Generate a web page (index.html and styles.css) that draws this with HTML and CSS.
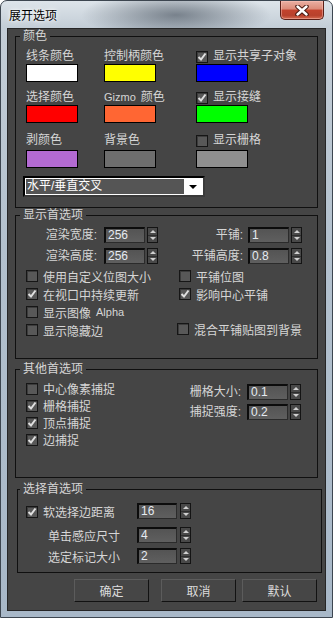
FILE: index.html
```html
<!DOCTYPE html>
<html lang="zh-CN">
<head>
  <meta charset="UTF-8">
  <meta name="viewport" content="width=device-width, initial-scale=1.0">
  <title>展开选项</title>
  <link rel="stylesheet" href="styles.css">
</head>
<body>
  <div class="window">
    <div class="titlebar">
      <span class="title">展开选项</span>
      <span class="close-btn">
        <svg width="14" height="11" viewBox="0 0 14 11">
          <path class="x-edge" d="M2.5 1.5 L11.5 9.5 M11.5 1.5 L2.5 9.5"/>
          <path class="x-mark" d="M2.5 1.5 L11.5 9.5 M11.5 1.5 L2.5 9.5"/>
        </svg>
      </span>
    </div>

    <div class="client">
      <!-- 颜色 -->
      <fieldset class="group group-colors">
        <legend>颜色</legend>
        <div class="color-grid">
          <div class="color-cell">
            <div class="color-label">线条颜色</div>
            <div class="swatch swatch-white"></div>
          </div>
          <div class="color-cell">
            <div class="color-label">控制柄颜色</div>
            <div class="swatch swatch-yellow"></div>
          </div>
          <div class="color-cell">
            <div class="color-label"><span class="cb"><svg class="tick" width="10" height="10" viewBox="0 0 10 10"><path d="M1.5 5 L4 7.5 L8.5 1.5"/></svg></span>显示共享子对象</div>
            <div class="swatch swatch-blue"></div>
          </div>

          <div class="color-cell">
            <div class="color-label">选择颜色</div>
            <div class="swatch swatch-red"></div>
          </div>
          <div class="color-cell">
            <div class="color-label"><span class="latin">Gizmo</span> 颜色</div>
            <div class="swatch swatch-orange"></div>
          </div>
          <div class="color-cell">
            <div class="color-label"><span class="cb"><svg class="tick" width="10" height="10" viewBox="0 0 10 10"><path d="M1.5 5 L4 7.5 L8.5 1.5"/></svg></span>显示接缝</div>
            <div class="swatch swatch-green"></div>
          </div>

          <div class="color-cell">
            <div class="color-label">剥颜色</div>
            <div class="swatch swatch-purple"></div>
          </div>
          <div class="color-cell">
            <div class="color-label">背景色</div>
            <div class="swatch swatch-grey"></div>
          </div>
          <div class="color-cell">
            <div class="color-label"><span class="cb"></span>显示栅格</div>
            <div class="swatch swatch-lightgrey"></div>
          </div>
        </div>

        <div class="combo">
          <span class="combo-value">水平/垂直交叉</span>
          <span class="combo-arrow"></span>
        </div>
      </fieldset>

      <!-- 显示首选项 -->
      <fieldset class="group group-display">
        <legend>显示首选项</legend>
        <div class="spin-grid">
          <div class="field">
            <span class="field-label label-l">渲染宽度:</span>
            <div class="spin"><span class="spin-input">256</span><span class="spin-arrows"><i class="up"></i><i class="down"></i></span></div>
          </div>
          <div class="field">
            <span class="field-label label-r">平铺:</span>
            <div class="spin"><span class="spin-input">1</span><span class="spin-arrows"><i class="up"></i><i class="down"></i></span></div>
          </div>
          <div class="field">
            <span class="field-label label-l">渲染高度:</span>
            <div class="spin"><span class="spin-input">256</span><span class="spin-arrows"><i class="up"></i><i class="down"></i></span></div>
          </div>
          <div class="field">
            <span class="field-label label-r">平铺高度:</span>
            <div class="spin"><span class="spin-input">0.8</span><span class="spin-arrows"><i class="up"></i><i class="down"></i></span></div>
          </div>
        </div>

        <div class="check-grid">
          <div class="check"><span class="cb"></span>使用自定义位图大小</div>
          <div class="check"><span class="cb"></span>平铺位图</div>
          <div class="check"><span class="cb"><svg class="tick" width="10" height="10" viewBox="0 0 10 10"><path d="M1.5 5 L4 7.5 L8.5 1.5"/></svg></span>在视口中持续更新</div>
          <div class="check"><span class="cb"><svg class="tick" width="10" height="10" viewBox="0 0 10 10"><path d="M1.5 5 L4 7.5 L8.5 1.5"/></svg></span>影响中心平铺</div>
          <div class="check"><span class="cb"></span>显示图像 <span class="latin">Alpha</span></div>
          <div></div>
          <div class="check"><span class="cb"></span>显示隐藏边</div>
          <div class="check check-shift"><span class="cb"></span>混合平铺贴图到背景</div>
        </div>
      </fieldset>

      <!-- 其他首选项 -->
      <fieldset class="group group-other">
        <legend>其他首选项</legend>
        <div class="other">
          <div class="check-list">
            <div class="check"><span class="cb"></span>中心像素捕捉</div>
            <div class="check"><span class="cb"><svg class="tick" width="10" height="10" viewBox="0 0 10 10"><path d="M1.5 5 L4 7.5 L8.5 1.5"/></svg></span>栅格捕捉</div>
            <div class="check"><span class="cb"><svg class="tick" width="10" height="10" viewBox="0 0 10 10"><path d="M1.5 5 L4 7.5 L8.5 1.5"/></svg></span>顶点捕捉</div>
            <div class="check"><span class="cb"><svg class="tick" width="10" height="10" viewBox="0 0 10 10"><path d="M1.5 5 L4 7.5 L8.5 1.5"/></svg></span>边捕捉</div>
          </div>
          <div class="other-fields">
            <div class="field">
              <span class="field-label label-o">栅格大小:</span>
              <div class="spin"><span class="spin-input">0.1</span><span class="spin-arrows"><i class="up"></i><i class="down"></i></span></div>
            </div>
            <div class="field">
              <span class="field-label label-o">捕捉强度:</span>
              <div class="spin"><span class="spin-input">0.2</span><span class="spin-arrows"><i class="up"></i><i class="down"></i></span></div>
            </div>
          </div>
        </div>
      </fieldset>

      <!-- 选择首选项 -->
      <fieldset class="group group-select">
        <legend>选择首选项</legend>
        <div class="select-grid">
          <div class="check"><span class="cb"><svg class="tick" width="10" height="10" viewBox="0 0 10 10"><path d="M1.5 5 L4 7.5 L8.5 1.5"/></svg></span>软选择边距离</div>
          <div class="spin"><span class="spin-input">16</span><span class="spin-arrows"><i class="up"></i><i class="down"></i></span></div>
          <div class="field indent">单击感应尺寸</div>
          <div class="spin"><span class="spin-input">4</span><span class="spin-arrows"><i class="up"></i><i class="down"></i></span></div>
          <div class="field indent">选定标记大小</div>
          <div class="spin"><span class="spin-input">2</span><span class="spin-arrows"><i class="up"></i><i class="down"></i></span></div>
        </div>
      </fieldset>

      <div class="buttons">
        <button class="btn btn-ok">确定</button>
        <button class="btn">取消</button>
        <button class="btn">默认</button>
      </div>
    </div>
  </div>
</body>
</html>
```

FILE: styles.css
```css
* {
  box-sizing: border-box;
}

body {
  margin: 0;
  font-family: "Liberation Sans", "Noto Sans CJK SC", sans-serif;
  font-size: 12px;
  color: #d6d6d6;
  background: #fff;
}

/* window frame */
.window {
  width: 333px;
  height: 618px;
  border: 1px solid #3d4650;
  border-radius: 7px 7px 0 0;
  background:
    radial-gradient(ellipse 95px 24px at 175px 14px, rgba(62, 72, 84, 0.6), rgba(62, 72, 84, 0) 100%),
    linear-gradient(180deg, #dde4ea 0, #c4ced7 26px, #b3c1ce 40%, #a8b8c8 100%);
  display: flex;
  flex-direction: column;
  overflow: hidden;
}

.titlebar {
  height: 27px;
  display: flex;
  align-items: flex-start;
  justify-content: space-between;
  padding: 0 8px;
}

.title {
  line-height: 27px;
  color: #000;
  font-family: "Noto Sans CJK SC", sans-serif;
  text-shadow: 0 0 6px rgba(255, 255, 255, 0.9), 0 0 3px #fff;
}

.close-btn {
  width: 44px;
  height: 19px;
  display: flex;
  align-items: center;
  justify-content: center;
  border: 1px solid #5b2018;
  border-top: none;
  border-radius: 0 0 5px 5px;
  background: linear-gradient(180deg, #eab0a3 0, #dc8a78 45%, #c3432d 50%, #b8412c 80%, #d46a50 100%);
  box-shadow: inset 0 0 0 1px rgba(255, 200, 190, 0.45);
}

.close-btn svg {
  display: block;
}

.x-edge {
  fill: none;
  stroke: #4a1a12;
  stroke-width: 4.5;
  stroke-linecap: round;
}

.x-mark {
  fill: none;
  stroke: #fff;
  stroke-width: 2.4;
  stroke-linecap: round;
}

.client {
  margin: 0 6px;
  height: 583px;
  background: #454545;
  border: 1px solid #262626;
}

/* group boxes */
.group {
  margin: 0 0 0 7px;
  width: 303px;
  border: 1px solid #101010;
  padding: 0 10px;
  min-width: 0;
}

.group legend {
  padding: 0 3px;
  margin-left: -6px;
  line-height: 14px;
}

.group-colors {
  height: 179px;
  padding-top: 6px;
}

.group-display {
  height: 151px;
}

.group-other {
  height: 116px;
  margin-top: 3px;
}

.group-select {
  height: 91px;
  width: 305px;
  margin: 4px 0 0 9px;
  padding-left: 8px;
}

.latin {
  font-size: 11px;
}

/* colours */
.color-grid {
  display: grid;
  grid-template-columns: 78px 92px 1fr;
  grid-template-rows: 41px 43px auto;
}

.color-label {
  height: 15px;
  line-height: 15px;
  display: flex;
  align-items: center;
  gap: 5px;
  white-space: nowrap;
}

.swatch {
  width: 52px;
  height: 18px;
  border: 1px solid #000;
}

.color-grid .color-cell:nth-child(n+7) .swatch {
  margin-top: 2px;
}

.swatch-white { background: #fff; }
.swatch-yellow { background: #ffff00; }
.swatch-blue { background: #0000ff; }
.swatch-red { background: #ff0000; }
.swatch-orange { background: #ff6633; }
.swatch-green { background: #00ff00; }
.swatch-purple { background: #b36ad2; }
.swatch-grey { background: #6e6e6e; }
.swatch-lightgrey { background: #8f8f8f; }

.combo {
  width: 182px;
  height: 21px;
  margin: 8px 0 0 -3px;
  border: 2px solid;
  border-color: #000 #3a3a3a #3a3a3a #000;
  background: #fff;
  padding: 1px;
  display: flex;
}

.combo-value {
  flex: 1;
  background: #555;
  color: #fff;
  line-height: 15px;
  padding-left: 1px;
}

.combo-arrow {
  width: 18px;
  display: flex;
  align-items: center;
  justify-content: center;
}

.combo-arrow::after {
  content: "";
  border-left: 4px solid transparent;
  border-right: 4px solid transparent;
  border-top: 4px solid #000;
}

/* checkboxes */
.cb {
  width: 12px;
  height: 12px;
  flex: none;
  border: 1px solid #161616;
  background: #585858;
  box-shadow: inset 1px 1px 0 #3c3c3c;
  display: inline-flex;
  align-items: center;
  justify-content: center;
}

.tick {
  display: block;
}

.tick path {
  fill: none;
  stroke: #e0e0e0;
  stroke-width: 2;
}

.check {
  display: flex;
  align-items: center;
  gap: 5px;
  white-space: nowrap;
}

/* spinners */
.spin {
  display: flex;
  align-items: center;
}

.spin-input {
  width: 41px;
  height: 16px;
  border-style: solid;
  border-width: 2px 1px 1px 2px;
  border-color: #0c0c0c #2b2b2b #2b2b2b #0c0c0c;
  background: linear-gradient(#545454, #5f5f5f);
  color: #e6ebf1;
  line-height: 13px;
  padding-left: 2px;
}

.spin-arrows {
  width: 11px;
  height: 16px;
  margin-left: 2px;
  border: 1px solid #141414;
  background: #494949;
  display: flex;
  flex-direction: column;
}

.spin-arrows i {
  flex: 1;
  display: flex;
  align-items: center;
  justify-content: center;
}

.spin-arrows i + i {
  border-top: 1px solid #2e2e2e;
}

.spin-arrows i::after {
  content: "";
  border-left: 3px solid transparent;
  border-right: 3px solid transparent;
}

.up::after {
  border-bottom: 3px solid #d0d0d0;
}

.down::after {
  border-top: 3px solid #d0d0d0;
}

.field {
  display: flex;
  align-items: center;
  height: 16px;
  white-space: nowrap;
}

.field-label {
  flex: none;
  text-align: right;
  line-height: 16px;
}

.label-l {
  width: 71px;
  margin-right: 7px;
}

.label-r {
  width: 84px;
  margin-right: 5px;
}

.label-o {
  width: 65px;
  margin-right: 6px;
}

/* display group */
.spin-grid {
  display: grid;
  grid-template-columns: 133px 1fr;
  row-gap: 5px;
  padding-top: 5px;
}

.check-grid {
  display: grid;
  grid-template-columns: 153px 1fr;
  grid-auto-rows: 18px;
  margin-top: 3px;
}

.check-shift {
  margin: -2px 0 0 -2px;
}

/* other group */
.other {
  display: flex;
  padding-top: 4px;
}

.check-list {
  width: 150px;
  display: grid;
  grid-auto-rows: 17px;
}

.other-fields {
  display: grid;
  row-gap: 4px;
  padding-top: 4px;
  align-content: start;
}

/* selection group */
.select-grid {
  display: grid;
  grid-template-columns: 111px auto;
  grid-template-rows: 24px 21px 16px;
  align-items: start;
  padding-top: 7px;
}

.select-grid .spin-input {
  width: 40px;
}

.select-grid .spin-arrows {
  margin-left: 3px;
}

.indent {
  padding-left: 22px;
}

/* buttons */
.buttons {
  display: flex;
  justify-content: flex-end;
  gap: 6px;
  margin-top: 6px;
  padding-right: 8px;
}

.btn {
  width: 75px;
  height: 23px;
  padding: 0;
  font: inherit;
  color: #dcdcdc;
  background: #464646;
  border: 1px solid;
  border-color: #5c5c5c #121212 #121212 #5c5c5c;
}

.btn-ok {
  margin-right: 6px;
}
```
